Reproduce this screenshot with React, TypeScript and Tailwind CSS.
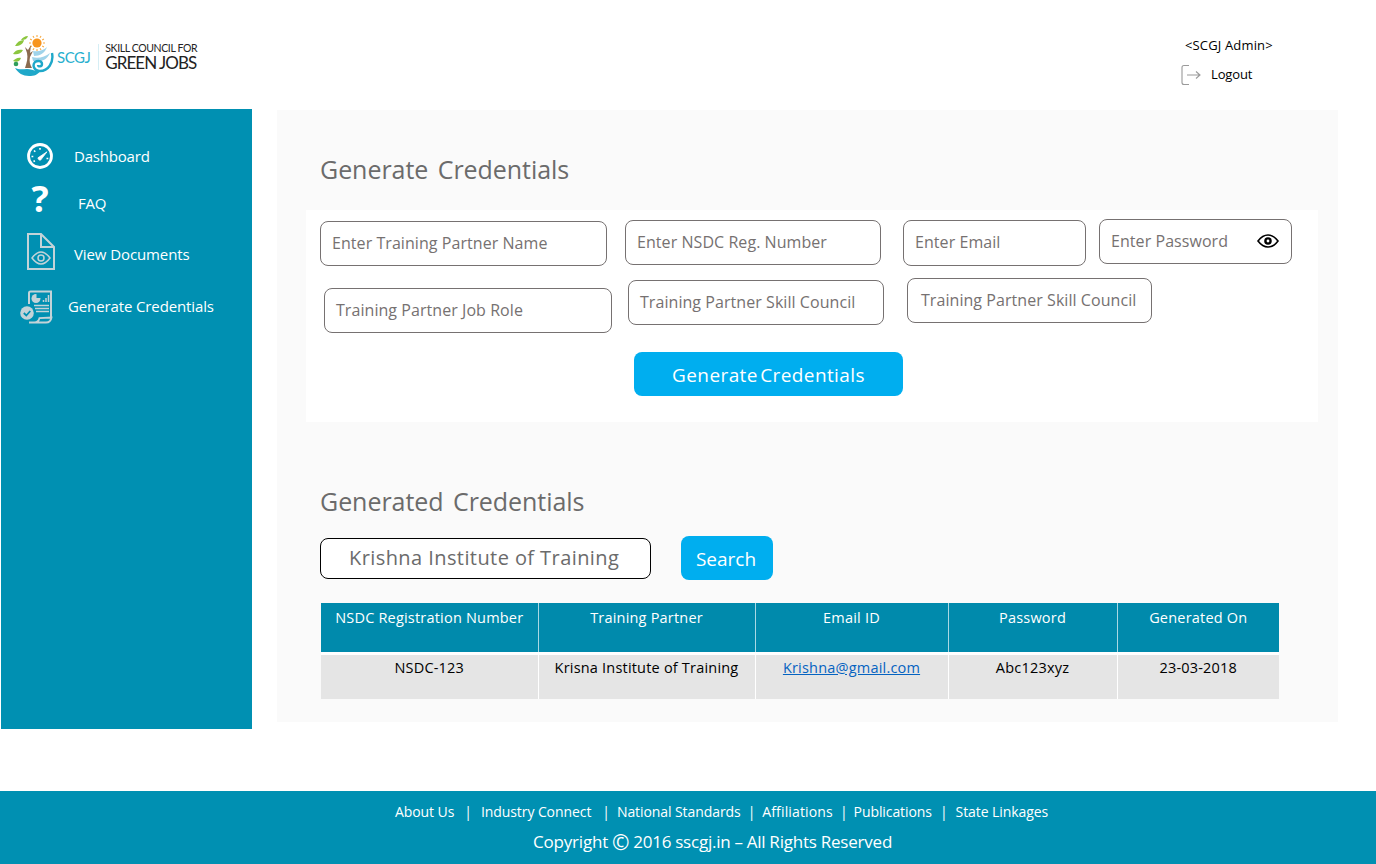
import React from "react";

function Logo() {
  return (
    <div className="flex items-center ml-[12px] mt-[35px] h-[41px]">
      <svg width="42" height="41" viewBox="0 0 42 41" className="shrink-0">
        <circle cx="25" cy="8" r="4.6" fill="#f7941d" />
        {[0, 30, 60, 90, 120, 150, 180, 210, 240, 270, 300, 330].map((a) => (
          <line key={a} x1="25" y1="2" x2="25" y2="0" stroke="#f7a941" strokeWidth="1.1" transform={`rotate(${a} 25 8)`} />
        ))}
        <path d="M13 33c2-6 3-10 2-15l-2-6 3 3 3-5-1 8 3-2-3 6c-1 4 0 8 2 11z" fill="#8a6a4f" />
        <path d="M3 11c2-4 5-6 9-6-1 4-4 6-9 6zM1 19c2-4 6-5 10-4-2 4-6 5-10 4zM1 26c2-2 5-4 8-3-1 3-4 5-8 3zM9 5c1-2 4-4 7-4-1 3-3 4-7 4z" fill="#8cc63f" />
        <circle cx="4" cy="29" r="2.300" fill="#2f9e5b" />
        <path d="M21 16c6 1 11-1 14-4-2 6-7 9-13 9zM20 22c6 2 13 0 18-4-3 7-10 10-17 8z" fill="#9fd3ea" />
        <path d="M40 18c2 10-4 18-12 18-6 0-8-6-5-9 3-2 7-1 7 2 0 3-4 3-4 1" fill="none" stroke="#1fa8c9" strokeWidth="2.400" />
        <path d="M3 33c4 2 8 1 12 1s9 3 14 1c-3 5-7 6-12 6-6 0-11-3-14-8z" fill="#1fa8c9" />
      </svg>
      <span className="ml-[3px] mt-[3px] text-[15px] leading-none text-[#27b0cf] font-['Lato',sans-serif] tracking-[-0.5px]">SCGJ</span>
      <span className="ml-[8px] mt-[2px] w-px h-[26px] bg-[#d5eef5]" />
      <div className="ml-[6px] flex flex-col gap-[1px] text-[#222] font-['Lato',sans-serif]">
        <span className="text-[10.5px] leading-[12px] tracking-[-0.38px] whitespace-nowrap">SKILL COUNCIL FOR</span>
        <span className="text-[17px] leading-[15px] tracking-[-0.95px] whitespace-nowrap">GREEN JOBS</span>
      </div>
    </div>
  );
}

function Gauge() {
  return (
    <svg width="28" height="28" viewBox="0 0 28 28" fill="none" stroke="white">
      <circle cx="14" cy="14" r="11.500" strokeWidth="2.800" />
      <path d="M14 6v1.800M8 8.500l1.300 1.300M5.500 14.500h1.800M20.500 16.500h1.800M7.500 19.500l1.400-.8" strokeWidth="1.600" />
      <path d="M12 15.800 21 9.800l-6.400 8.300a2.200 2.200 0 0 1-2.600-2.300z" fill="white" strokeWidth="0.800" />
    </svg>
  );
}

function DocEye() {
  return (
    <svg width="28" height="38" viewBox="0 0 28 38" fill="none" stroke="#c3d3d8" strokeWidth="2">
      <path d="M1 1h13l13 13v22H1zM14 1v13h13" />
      <path d="M5 25c3-4 6-6 9-6s6 2 9 6c-3 4-6 6-9 6s-6-2-9-6z" strokeWidth="1.500" />
      <circle cx="14" cy="25" r="3" strokeWidth="1.500" />
    </svg>
  );
}

function DocChart() {
  return (
    <svg width="34" height="34" viewBox="0 0 34 34" fill="none">
      <path d="M10 14V3q0-1.500 1.500-1.500H32v26" stroke="#c3d3d8" strokeWidth="2" />
      <path d="M10 32.500h17c3 0 5-2 5.500-5l-12 .5c-.5 2-2 4.500-5 4.500" stroke="#c3d3d8" strokeWidth="1.800" />
      <circle cx="17" cy="8.500" r="4.500" fill="#c3d3d8" />
      <path d="M17.500 8V3.500a4.500 4.500 0 0 1 4.500 4.500z" fill="#0090b2" />
      <path d="M24.500 12v-2M27 12V8M29.500 12V5" stroke="#c3d3d8" strokeWidth="1.500" />
      <path d="M15 15.500h15M16 18.500h14M17 21.500h13" stroke="#c3d3d8" strokeWidth="1.400" />
      <circle cx="8" cy="23" r="6.800" fill="#c3d3d8" />
      <path d="m4.800 23 2.500 2.500 4-4.500" stroke="#0090b2" strokeWidth="1.800" />
    </svg>
  );
}

function LogoutIcon() {
  return (
    <svg width="20" height="22" viewBox="0 0 20 22" fill="none" stroke="#9a9a9a" strokeWidth="1.100">
      <path d="M8 1.500H3Q1 1.500 1 3.500v15q0 2 2 2h5" />
      <path d="M6 11h13M15 7.500 19 11l-4 3.500" />
    </svg>
  );
}

function EyeIcon() {
  return (
    <svg width="22" height="14" viewBox="0 0 22 14" className="shrink-0">
      <path d="M1 7c3-4 6.500-6 10-6s7 2 10 6c-3 4-6.500 6-10 6S4 11 1 7z" fill="white" stroke="black" strokeWidth="1.600" />
      <circle cx="11" cy="7" r="3.800" fill="black" />
      <circle cx="11" cy="7" r="1.400" fill="white" />
    </svg>
  );
}

function Field({ text, className, children }: { text: string; className: string; children?: React.ReactNode }) {
  return (
    <div className={`shrink-0 flex items-center pl-[11px] pr-[12px] pb-[2px] border border-[#767171] rounded-[8px] bg-white text-[16px] tracking-[0.06px] text-[#767171] whitespace-nowrap ${className}`}>
      <span className="flex-1">{text}</span>
      {children}
    </div>
  );
}

const heads = [
  ["NSDC Registration Number", "w-[217px]"],
  ["Training Partner", "w-[217px]"],
  ["Email ID", "w-[193px]"],
  ["Password", "w-[169px]"],
  ["Generated On", "w-[162px]"],
];

export default function App() {
  return (
    <div className="w-[1376px] h-[864px] bg-white flex flex-col overflow-hidden font-['Open_Sans',sans-serif]">
      <header className="h-[109px] shrink-0 flex justify-between">
        <Logo />
        <div className="mt-[36px] mr-[103px] w-[92px] text-[13px] text-black">
          <div className="pl-[4px] leading-[18px] tracking-[0.15px] whitespace-nowrap">&lt;SCGJ Admin&gt;</div>
          <div className="mt-[10px] flex items-center h-[22px] whitespace-nowrap">
            <LogoutIcon />
            <span className="ml-[10px] tracking-[-0.15px]">Logout</span>
          </div>
        </div>
      </header>

      <div className="flex h-[620px] shrink-0">
        <aside className="ml-px w-[251px] h-[620px] bg-[#0090b2] text-white text-[15px] tracking-[-0.2px]">
          <div className="flex items-center h-[28px] mt-[33px] ml-[25px]">
            <Gauge />
            <span className="ml-[20px]">Dashboard</span>
          </div>
          <div className="flex items-center h-[36px] mt-[11px] ml-[27px]">
            <span className="w-[24px] text-center text-[36px] leading-[36px] font-bold">?</span>
            <span className="ml-[26px] mt-[8px]">FAQ</span>
          </div>
          <div className="flex items-center h-[38px] mt-[16px] ml-[26px]">
            <DocEye />
            <span className="ml-[19px] mt-[4px] tracking-[-0.1px]">View Documents</span>
          </div>
          <div className="flex items-center h-[34px] mt-[19px] ml-[18px]">
            <DocChart />
            <span className="ml-[15px] mb-[2px] tracking-[-0.12px]">Generate Credentials</span>
          </div>
        </aside>

        <main className="ml-[25px] mt-px w-[1061px] h-[612px] bg-[#fafafa] flex flex-col">
          <h1 className="ml-[43px] mt-[41px] h-[36px] text-[25px] leading-[36px] text-[#6b6b6b] tracking-[-0.05px] [word-spacing:3px]">Generate Credentials</h1>
          <section className="ml-[29px] mt-[23px] w-[1012px] h-[212px] bg-white flex flex-col">
            <div className="flex h-[59px] pl-[14px] shrink-0">
              <Field text="Enter Training Partner Name" className="mt-[11px] w-[287px] h-[45px]" />
              <Field text="Enter NSDC Reg. Number" className="mt-[10px] ml-[18px] w-[256px] h-[45px]" />
              <Field text="Enter Email" className="mt-[10px] ml-[22px] w-[183px] h-[46px]" />
              <Field text="Enter Password" className="mt-[9px] ml-[13px] w-[193px] h-[45px]">
                <EyeIcon />
              </Field>
            </div>
            <div className="flex h-[64px] pl-[18px] shrink-0">
              <Field text="Training Partner Job Role" className="mt-[19px] w-[288px] h-[45px]" />
              <Field text="Training Partner Skill Council" className="mt-[11px] ml-[16px] w-[256px] h-[45px]" />
              <Field text="Training Partner Skill Council" className="mt-[9px] ml-[23px] w-[245px] h-[45px] pl-[13px]" />
            </div>
            <div className="mt-[19px] ml-[328px] w-[269px] h-[44px] pt-[2px] rounded-[8px] bg-[#00aeef] flex items-center justify-center text-white text-[19px] tracking-[0.4px] [word-spacing:-3px]">
              Generate Credentials
            </div>
          </section>
          <h2 className="ml-[43px] mt-[61px] h-[36px] text-[25px] leading-[36px] text-[#6b6b6b] tracking-[-0.05px] [word-spacing:3px]">Generated Credentials</h2>
          <div className="flex mt-[17px] ml-[43px] h-[44px]">
            <div className="mt-[2px] w-[331px] h-[41px] pb-[2px] border border-black rounded-[8px] bg-white flex items-center pl-[28px] text-[20px] text-[#6b6b6b] tracking-[0.42px] whitespace-nowrap">
              Krishna Institute of Training
            </div>
            <div className="ml-[30px] w-[92px] h-[44px] pt-[2px] pr-[2px] rounded-[8px] bg-[#00aeef] flex items-center justify-center text-white text-[19px]">
              Search
            </div>
          </div>
          <table className="ml-[44px] mt-[23px] w-[958px] table-fixed border-collapse text-[14.5px] tracking-[0.2px]">
            <thead>
              <tr className="h-[50px] bg-[#008aac] text-white">
                {heads.map(([h, w]) => (
                  <th key={h} className={`${w} font-normal align-top pt-[4px] border-x border-[#a9d8e4] first:border-l-0 last:border-r-0 whitespace-nowrap`}>{h}</th>
                ))}
              </tr>
            </thead>
            <tbody>
              <tr className="h-[46px] bg-[#e5e5e5] text-black border-t-[3px] border-white">
                <td className="text-center align-top pt-[2px] border-x border-white first:border-l-0">NSDC-123</td>
                <td className="text-center align-top pt-[2px] border-x border-white whitespace-nowrap">Krisna Institute of Training</td>
                <td className="text-center align-top pt-[2px] border-x border-white"><a className="text-[#0563c1] underline">Krishna@gmail.com</a></td>
                <td className="text-center align-top pt-[2px] border-x border-white">Abc123xyz</td>
                <td className="text-center align-top pt-[2px] border-x border-white last:border-r-0">23-03-2018</td>
              </tr>
            </tbody>
          </table>
        </main>
      </div>

      <footer className="mt-[62px] h-[73px] shrink-0 bg-[#0090b2] flex flex-col text-white">
        <div className="mt-[10px] ml-[395px] flex h-[20px] items-center text-[14px] tracking-[-0.08px] whitespace-nowrap">
          <span>About Us</span>
          <span className="ml-[10px]">|</span>
          <span className="ml-[9px]">Industry Connect</span>
          <span className="ml-[11px]">|</span>
          <span className="ml-[7px]">National Standards</span>
          <span className="ml-[7px]">|</span>
          <span className="ml-[7px] tracking-[0.15px]">Affiliations</span>
          <span className="ml-[7px]">|</span>
          <span className="ml-[6px]">Publications</span>
          <span className="ml-[8px]">|</span>
          <span className="ml-[8px]">State Linkages</span>
        </div>
        <div className="mt-[9px] ml-[533px] h-[24px] text-[17px] leading-[24px] tracking-[-0.2px] [word-spacing:-0.3px] whitespace-nowrap">
          Copyright <span className="text-[21px] leading-none align-[-2px]">©</span> 2016 sscgj.in – All Rights Reserved
        </div>
      </footer>
    </div>
  );
}
